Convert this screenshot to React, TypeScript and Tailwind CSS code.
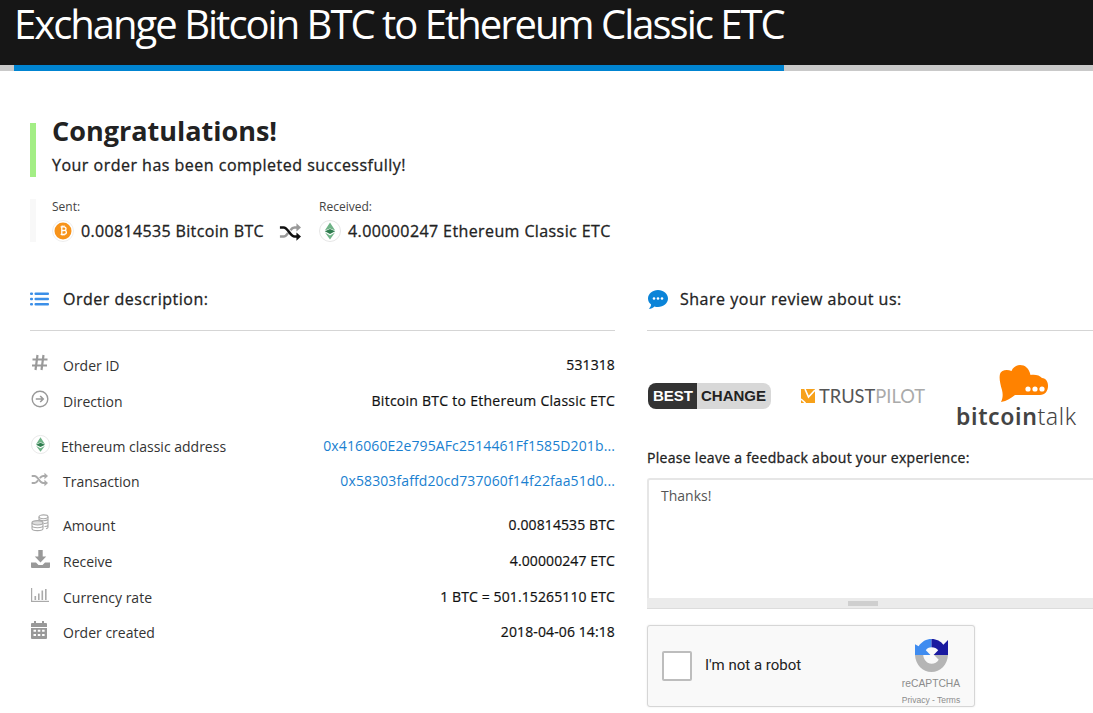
import React from "react";

const Btc = () => (
  <svg width="22" height="22" viewBox="0 0 22 22">
    <circle cx="11" cy="11" r="10.5" fill="#fff" stroke="#eee" />
    <circle cx="11" cy="11" r="8.500" fill="#f7931a" />
    <path d="M8.6 6.8h3.2c1.4 0 2.2.8 2.2 1.9 0 .8-.4 1.4-1.1 1.7.9.2 1.5.9 1.5 1.9 0 1.3-1 2.1-2.4 2.1H8.6M9.8 6.8v7.6M9.9 10.5h2.4M10.2 5.6v1.2M12 5.6v1.2M10.2 14.4v1.2M12 14.4v1.2" fill="none" stroke="#fff" strokeWidth="1.3" />
  </svg>
);

const Etc = ({ size = 22 }: { size?: number }) => (
  <svg width={size} height={size} viewBox="0 0 22 22">
    <circle cx="11" cy="11" r="10.5" fill="#fff" stroke="#e6e6e6" />
    <path d="M11 2.500 5.800 10.600 11 8.400l5.200 2.200L11 2.500Z" fill="#6fb387" />
    <path d="M5.800 11.200 11 9l5.200 2.200L11 14 5.800 11.200Z" fill="#2f7d4f" />
    <path d="M6 12.600 11 19.500l5-6.900-5 2.800-5-2.800Z" fill="#6fb387" />
  </svg>
);

const Shuffle = ({ color = "#222", second = "#999", size = 24 }: { color?: string; second?: string; size?: number }) => (
  <svg width={size} height={size} viewBox="0 0 24 24" fill="none" strokeWidth="2.8">
    <path d="M1 17h4c2.2 0 3.6-1.8 5-4M12.5 10c1.200-1.700 2.600-3 4.500-3h3" stroke={second} />
    <path d="M19 2.500 24 7 19 11.500Z" fill={second} />
    <path d="M1 7h4c5 0 7 10 12 10h3" stroke={color} />
    <path d="M19 12.500 24 17 19 21.500Z" fill={color} />
  </svg>
);

const IconList = () => (
  <svg width="19" height="14" viewBox="0 0 19 14" fill="#3b8fe8">
    <rect x="0" y="0.500" width="3" height="2.600" rx="1" />
    <rect x="0" y="5.700" width="3" height="2.600" rx="1" />
    <rect x="0" y="10.900" width="3" height="2.600" rx="1" />
    <rect x="4.500" y="0.500" width="14.500" height="2.600" rx="1" />
    <rect x="4.500" y="5.700" width="14.500" height="2.600" rx="1" />
    <rect x="4.500" y="10.900" width="14.500" height="2.600" rx="1" />
  </svg>
);

const IconHash = () => (
  <svg width="18" height="18" viewBox="0 0 18 18" fill="none" stroke="#999" strokeWidth="2.200">
    <path d="M6.500 1 4.500 16M12.500 1l-2 15M1.500 5.500h15M1 11.500h15" />
  </svg>
);

const IconArrowCircle = () => (
  <svg width="18" height="18" viewBox="0 0 18 18" fill="none" stroke="#999">
    <circle cx="9" cy="9" r="7.800" strokeWidth="1.400" />
    <path d="M4.800 9h7M9.200 6l3 3-3 3" strokeWidth="1.600" />
  </svg>
);

const IconCoins = () => (
  <svg width="18" height="18" viewBox="0 0 18 18" fill="none" stroke="#aaa" strokeWidth="1.100">
    <ellipse cx="12.500" cy="2.800" rx="4.500" ry="1.900" />
    <path d="M8 2.800V7M17 2.800v10.400c0 .7-.8 1.300-2 1.600M8 5.500c.8.700 2.500 1.200 4.500 1.200s3.700-.5 4.500-1.200M13 9.500c1.800 0 3.200-.5 4-1.200M13.500 12.500c1.600-.1 2.900-.5 3.500-1.200" />
    <ellipse cx="6.500" cy="8.800" rx="5.500" ry="2.200" fill="#ddd" />
    <path d="M1 8.800v5.600c0 1.200 2.500 2.200 5.500 2.200s5.500-1 5.500-2.200V8.800M1 11.600c0 1.200 2.500 2.200 5.500 2.200s5.500-1 5.500-2.200" />
  </svg>
);

const IconDownload = () => (
  <svg width="19" height="18" viewBox="0 0 19 18" fill="#999">
    <path d="M7.300 0h4.400v6.500h3.500L9.500 12.500 3.800 6.500h3.500V0Z" />
    <path d="M0 12.500h5l2.500 2.500h4l2.500-2.500h5V17a1 1 0 0 1-1 1H1a1 1 0 0 1-1-1v-4.500Z" />
  </svg>
);

const IconChart = () => (
  <svg width="18" height="14" viewBox="0 0 18 14" fill="#aaa">
    <rect x="0" y="0" width="1.200" height="14" />
    <rect x="0" y="12.800" width="18" height="1.200" />
    <rect x="3.500" y="8" width="1.600" height="4" />
    <rect x="7" y="5.500" width="1.600" height="6.500" />
    <rect x="10.500" y="2.500" width="1.600" height="9.500" />
    <rect x="14" y="1" width="1.600" height="11" />
  </svg>
);

const IconCalendar = () => (
  <svg width="16" height="18" viewBox="0 0 16 18" fill="#999">
    <rect x="3" y="0" width="2" height="3.500" />
    <rect x="11" y="0" width="2" height="3.500" />
    <path d="M1 2h14a1 1 0 0 1 1 1v3H0V3a1 1 0 0 1 1-1Z" />
    <path fillRule="evenodd" d="M0 7h16v10a1 1 0 0 1-1 1H1a1 1 0 0 1-1-1V7Zm2.500 1.800v2h2.500v-2H2.500Zm4.300 0v2h2.500v-2H6.800Zm4.300 0v2h2.500v-2h-2.500ZM2.500 13v2h2.500v-2H2.500Zm4.300 0v2h2.500v-2H6.800Zm4.300 0v2h2.500v-2h-2.500Z" />
  </svg>
);

const IconChat = () => (
  <svg width="20" height="19" viewBox="0 0 20 19">
    <path d="M10 0c5.500 0 10 3.800 10 8.500S15.500 17 10 17c-1.300 0-2.500-.2-3.600-.6C5 17.700 3 18.800.8 18.800 2.300 17.500 3 16 3.100 14.600 1.200 13.100 0 10.900 0 8.500 0 3.800 4.500 0 10 0Z" fill="#0b84d8" />
    <circle cx="6" cy="8.500" r="1.300" fill="#fff" />
    <circle cx="10" cy="8.500" r="1.300" fill="#fff" />
    <circle cx="14" cy="8.500" r="1.300" fill="#fff" />
  </svg>
);

const Recaptcha = () => (
  <svg width="33" height="33" viewBox="0 0 32 32">
    <path d="M0 15.500h8c.2 4.500 3.700 8.500 8 8.500 3 0 5.500-1.500 7-4l-4.500-4.500H32C31.500 25 24.500 32 16 32S.5 25 0 15.500Z" fill="#b5b5b5" />
    <path d="M16 0v8c-2.500 0-4.500 1.200-5.500 3l4.500 4.500H0V5l3.500 2C6.500 2.500 11 0 16 0Z" fill="#3f8cf0" />
    <path d="M16 0c5 0 9 2.200 11.500 5.500L32 1v14.500H18l4.500-4.500C21 9 19 8 16 8Z" fill="#1a1aa0" />
  </svg>
);

function Row({ icon, label, value, link, labelClass = "", valueClass = "tracking-[0.11px]", className = "" }: { icon: React.ReactNode; label: string; value: string; link?: boolean; labelClass?: string; valueClass?: string; className?: string }) {
  return (
    <div className={`flex h-[36px] items-center ${className}`}>
      <div className="flex h-[36px] w-[33px] shrink-0 items-center pb-[4px] pl-[1px]">{icon}</div>
      <div className={`pt-[1px] text-[14px] text-[#333] ${labelClass}`}>{label}</div>
      <div className={`ml-auto pb-[1px] text-[14px] ${valueClass} ${link ? "text-[#1a7fd0]" : "text-[#111] [-webkit-text-stroke:0.2px_#111]"}`}>{value}</div>
    </div>
  );
}

export default function App() {
  return (
    <div className="h-[713px] w-[1093px] overflow-hidden bg-white font-['Open_Sans',sans-serif] text-[#222]">
      <header>
        <div className="flex h-[65px] items-start bg-[#161616] pl-[14px]">
          <h1 className="whitespace-nowrap text-[40px] leading-[48px] font-normal tracking-[-2px] text-white">Exchange Bitcoin BTC to Ethereum Classic ETC</h1>
        </div>
        <div className="h-[6px] bg-[#c9c9c9] pl-[14px]">
          <div className="h-[6px] w-[770px] bg-[#0084d1]" />
        </div>
      </header>

      <section className="pt-[52px] pl-[30px]">
        <div className="flex h-[54px] flex-col border-l-[6px] border-[#a3ee85] pl-[16px]">
          <div className="mt-[-10px] text-[27px] leading-[36px] font-bold text-[#222]">Congratulations!</div>
          <div className="mt-[5px] text-[16px] leading-[22px] font-medium tracking-[0.49px] text-[#222] [-webkit-text-stroke:0.3px_#222]">Your order has been completed successfully!</div>
        </div>

        <div className="mt-[22px] flex h-[43px] border-l-[6px] border-[#f8f8f8] pl-[16px]">
          <div className="w-[267px]">
            <div className="text-[12px] leading-[16px] text-[#444]">Sent:</div>
            <div className="mt-[5px] flex h-[22px] items-center">
              <Btc />
              <span className="ml-[7px] text-[16px] leading-[22px] font-medium tracking-[0.35px] text-[#222] [-webkit-text-stroke:0.3px_#222]">0.00814535 Bitcoin BTC</span>
              <div className="mt-[2px] ml-[15px] flex h-[22px] items-center"><Shuffle size={22} second="#999" color="#111" /></div>
            </div>
          </div>
          <div>
            <div className="text-[12px] leading-[16px] text-[#444]">Received:</div>
            <div className="mt-[5px] flex h-[22px] items-center">
              <Etc />
              <span className="ml-[7px] text-[16px] leading-[22px] font-medium tracking-[0.4px] text-[#222] [-webkit-text-stroke:0.3px_#222]">4.00000247 Ethereum Classic ETC</span>
            </div>
          </div>
        </div>
      </section>

      <div className="mt-[30px] flex pl-[30px]">
        <section className="w-[585px] shrink-0">
          <div className="flex h-[59px] items-start border-b border-[#d5d5d5] pt-[15px]">
            <div className="mt-[5px] w-[33px]"><IconList /></div>
            <div className="text-[16px] leading-[24px] font-medium tracking-[0.51px] text-[#222] [-webkit-text-stroke:0.3px_#222]">Order description:</div>
          </div>
          <div className="pt-[16px]">
            <Row icon={<IconHash />} label="Order ID" value="531318" />
            <Row icon={<IconArrowCircle />} label="Direction" value="Bitcoin BTC to Ethereum Classic ETC" valueClass="tracking-[0.26px]" />
            <Row icon={<Etc size={19} />} label="Ethereum classic address" value="0x416060E2e795AFc2514461Ff1585D201b..." link labelClass="-ml-[2px]" className="mt-[9px]" />
            <Row icon={<Shuffle size={17} color="#aaa" second="#aaa" />} label="Transaction" value="0x58303faffd20cd737060f14f22faa51d0..." link className="-mt-[1px]" />
            <Row icon={<IconCoins />} label="Amount" value="0.00814535 BTC" className="mt-[8px]" />
            <Row icon={<IconDownload />} label="Receive" value="4.00000247 ETC" />
            <Row icon={<IconChart />} label="Currency rate" value="1 BTC = 501.15265110 ETC" />
            <Row icon={<IconCalendar />} label="Order created" value="2018-04-06 14:18" className="-mt-[1px]" />
          </div>
        </section>

        <section className="ml-[32px] w-[446px] shrink-0">
          <div className="flex h-[59px] items-start border-b border-[#d5d5d5] pt-[15px]">
            <div className="mt-[3px] ml-[1px] w-[32px]"><IconChat /></div>
            <div className="text-[16px] leading-[24px] font-medium tracking-[0.51px] text-[#222] [-webkit-text-stroke:0.3px_#222]">Share your review about us:</div>
          </div>

          <div className="flex h-[96px] items-start">
            <div className="mt-[52px] ml-[1px] flex h-[26px] w-[123px] overflow-hidden rounded-[8px] font-['Liberation_Sans',sans-serif] text-[15px] leading-[26px] font-bold">
              <div className="w-[49px] bg-[#333] pl-[5px] text-white">BEST</div>
              <div className="flex-1 bg-[#d8d8d8] pl-[4px] text-[#222]">CHANGE</div>
            </div>
            <div className="mt-[53px] ml-[30px] flex h-[24px] items-center">
              <svg width="14" height="14" viewBox="0 0 14 14">
                <rect width="14" height="14" fill="#f7a11a" />
                <path d="M0 10 4.500 14M4 0l3.500 8L14 1" fill="none" stroke="#fff" strokeWidth="1.600" />
              </svg>
              <span className="ml-[4px] font-['Lato',sans-serif] text-[18.3px] leading-[24px] text-[#555]">TRUST</span>
              <span className="font-['Lato',sans-serif] text-[18.3px] leading-[24px] text-[#aaa]">PILOT</span>
            </div>
            <div className="ml-[31px] flex w-[124px] flex-col items-start pt-[34px]">
              <svg className="ml-[43px]" width="49" height="37" viewBox="0 0 49 37">
                <path d="M1 9C2 5 8 4 12.500 6 14 2 18 0 21 0 26 0 30 3 31.500 10 35 9 41 10 43 13 47 13 49 17 49 21 49 26 46 30 41 30H16C12 33 8 36 2 37 4 33 4 29 3 25 1 18 0 13 1 9Z" fill="#ff8200" />
                <circle cx="29" cy="24" r="2.600" fill="#fff" />
                <circle cx="36" cy="24" r="2.600" fill="#fff" />
                <circle cx="43" cy="24" r="2.600" fill="#fff" />
              </svg>
              <div className="mt-[1px] whitespace-nowrap font-['Noto_Sans',sans-serif] text-[23px] leading-[26px] tracking-[0.6px] text-[#444]"><span className="font-semibold">bitcoin</span><span className="font-light">talk</span></div>
            </div>
          </div>

          <div className="mt-[21px] text-[14px] leading-[20px] font-normal tracking-[0.3px] text-[#222] [-webkit-text-stroke:0.3px_#222]">Please leave a feedback about your experience:</div>
          <div className="mt-[10px]">
            <div className="h-[120px] rounded-tl-[3px] border-t-[2px] border-l-[2px] border-[#e6e6e6] pt-[6px] pl-[12px] text-[14px] leading-[20px] text-[#555]">Thanks!</div>
            <div className="flex h-[11px] justify-center border-b border-[#dcdcdc] bg-[#ebebeb] pr-[15px]">
              <div className="mt-[3px] h-[5px] w-[30px] bg-[#cfcfcf]" />
            </div>
          </div>

          <div className="mt-[16px] flex h-[82px] w-[328px] items-center rounded-[3px] border border-[#d6d6d6] bg-[#f9f9f9] shadow-[0_0_2px_rgba(0,0,0,0.1)]">
            <div className="ml-[14px] h-[30px] w-[30px] rounded-[2px] border-[2px] border-[#bdbdbd] bg-white" />
            <div className="ml-[13px] pb-[2px] font-['Roboto',sans-serif] text-[15px] text-[#222]">I'm not a robot</div>
            <div className="mr-[13px] ml-auto flex w-[60px] flex-col items-center pt-[12px] font-['Liberation_Sans',sans-serif] text-[#8c8c8c]">
              <Recaptcha />
              <div className="mt-[5px] whitespace-nowrap text-[10.3px] leading-[14px]">reCAPTCHA</div>
              <div className="mt-[3px] whitespace-nowrap text-[8.500px] leading-[12px]">Privacy - Terms</div>
            </div>
          </div>
        </section>
      </div>
    </div>
  );
}
